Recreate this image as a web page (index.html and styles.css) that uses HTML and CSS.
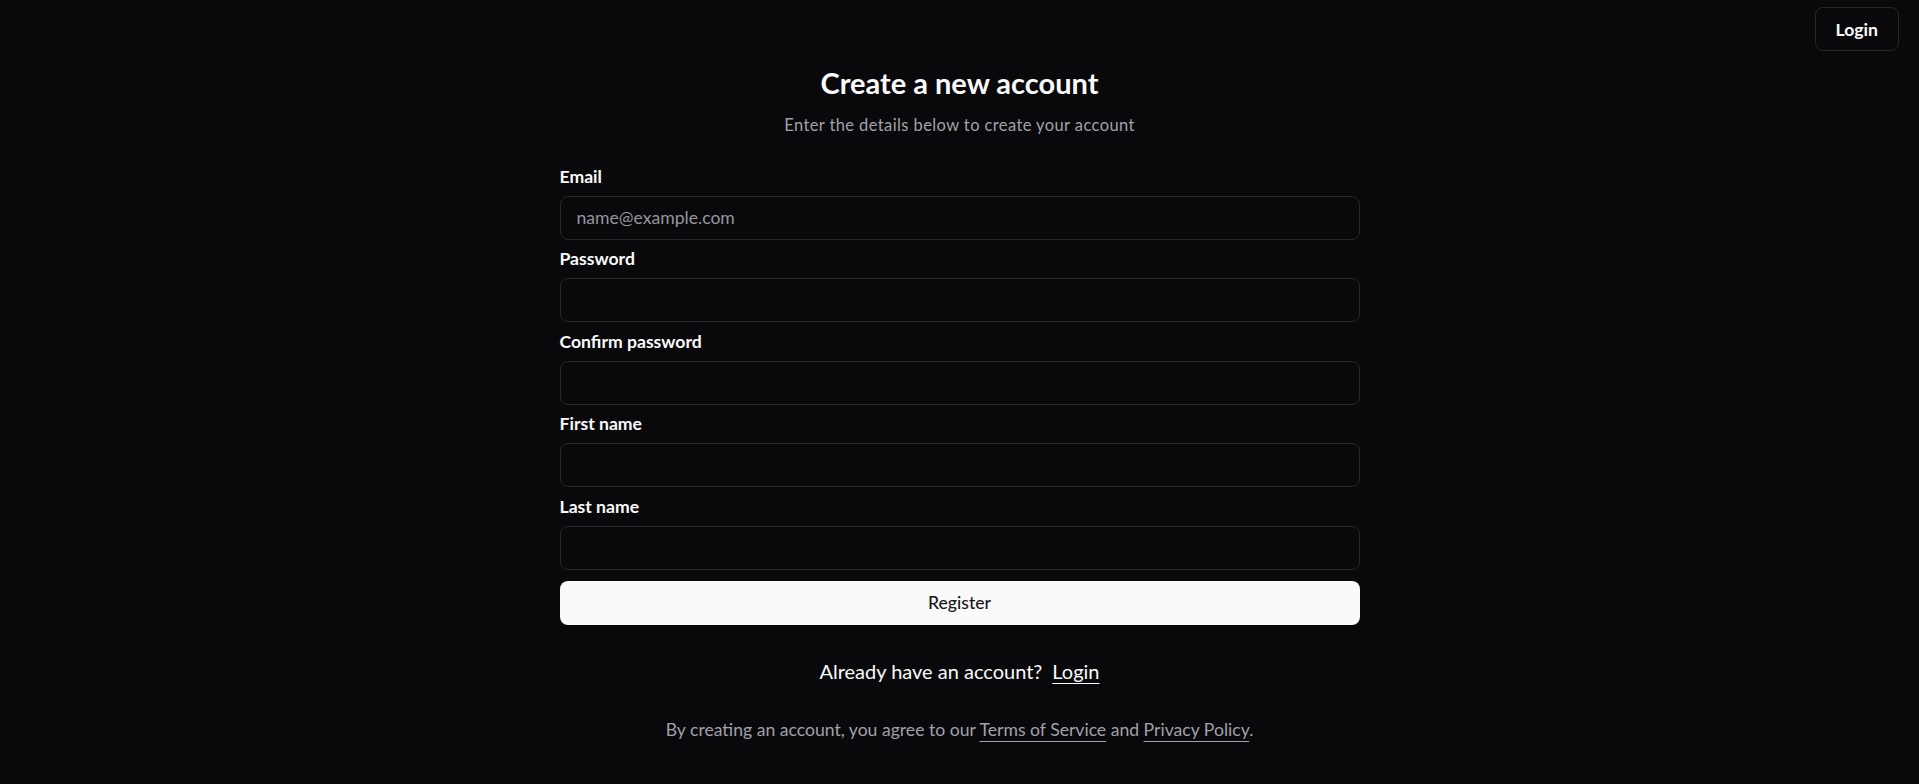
FILE: index.html
```html
<!DOCTYPE html>
<html lang="en">
<head>
<meta charset="utf-8">
<title>Create a new account</title>
<link rel="stylesheet" href="styles.css">
</head>
<body>
<header class="topbar">
  <a class="btn-outline" href="#">Login</a>
</header>
<main class="page">
  <div class="auth">
    <div class="heading">
      <h1 class="title">Create a new account</h1>
      <p class="subtitle">Enter the details below to create your account</p>
    </div>
    <form class="form">
      <div class="field">
        <label class="label" for="email">Email</label>
        <input class="input" id="email" type="email" placeholder="name@example.com">
      </div>
      <div class="field">
        <label class="label" for="password">Password</label>
        <input class="input" id="password" type="password">
      </div>
      <div class="field">
        <label class="label" for="confirm">Confirm password</label>
        <input class="input" id="confirm" type="password">
      </div>
      <div class="field">
        <label class="label" for="first">First name</label>
        <input class="input" id="first" type="text">
      </div>
      <div class="field">
        <label class="label" for="last">Last name</label>
        <input class="input" id="last" type="text">
      </div>
      <button class="btn-primary" type="button">Register</button>
    </form>
    <p class="switch">Already have an account?<span class="sp"></span><a class="switch-link" href="#">Login</a></p>
    <p class="terms">By creating an account, you agree to our <a class="terms-link" href="#">Terms of Service</a> and <a class="terms-link" href="#">Privacy Policy</a>.</p>
  </div>
</main>
</body>
</html>
```
FILE: styles.css
```css
* { box-sizing: border-box; }
html, body { margin: 0; padding: 0; }
body {
  background: #09090b;
  color: #fafafa;
  font-family: Lato, "Open Sans", sans-serif;
  min-height: 784px;
}
.topbar {
  display: flex;
  justify-content: flex-end;
  padding: 7px 20px 0;
}
.btn-outline {
  display: inline-flex;
  align-items: center;
  justify-content: center;
  height: 44px;
  padding: 0 20px;
  border: 1px solid #27272a;
  border-radius: 8px;
  color: #fafafa;
  text-decoration: none;
  font-size: 17.6px;
  font-weight: 700;
}
.page {
  display: flex;
  justify-content: center;
  padding-top: 14px;
}
.auth {
  width: 800px;
  display: flex;
  flex-direction: column;
}
.heading {
  display: flex;
  flex-direction: column;
  align-items: center;
  text-align: center;
}
.title {
  margin: 0;
  font-size: 29px;
  line-height: 36px;
  font-weight: 700;
}
.subtitle {
  margin: 12px 0 0;
  font-size: 16.5px;
  line-height: 24px;
  letter-spacing: 0.4px;
  color: #a1a1aa;
}
.form {
  margin-top: 27.5px;
  display: flex;
  flex-direction: column;
  gap: 7.5px;
}
.field {
  display: flex;
  flex-direction: column;
  gap: 7px;
}
.label {
  font-size: 17.6px;
  line-height: 24px;
  font-weight: 700;
  color: #fafafa;
}
.input {
  height: 44px;
  width: 100%;
  padding: 0 16px;
  border: 1px solid #27272a;
  border-radius: 8px;
  background: transparent;
  color: #fafafa;
  font-family: inherit;
  font-size: 17.6px;
  outline: none;
}
.input::placeholder { color: #95959e; }
.btn-primary {
  margin-top: 3.5px;
  height: 44px;
  width: 100%;
  border: none;
  border-radius: 8px;
  background: #fafafa;
  color: #18181b;
  font-family: inherit;
  font-size: 17.6px;
  font-weight: 500;
  cursor: pointer;
}
.switch {
  margin: 32px 0 0;
  text-align: center;
  font-size: 20px;
  line-height: 28px;
  color: #fafafa;
}
.sp { display: inline-block; width: 10px; }
.switch-link {
  color: #fafafa;
  text-decoration: underline;
  text-underline-offset: 4px;
  text-decoration-thickness: 1px;
}
.terms {
  margin: 32px 0 0;
  text-align: center;
  font-size: 17.6px;
  line-height: 26px;
  color: #a1a1aa;
}
.terms-link {
  color: #a1a1aa;
  text-decoration: underline;
  text-underline-offset: 5px;
  text-decoration-thickness: 1px;
  text-decoration-color: #a1a1aa;
}
```
